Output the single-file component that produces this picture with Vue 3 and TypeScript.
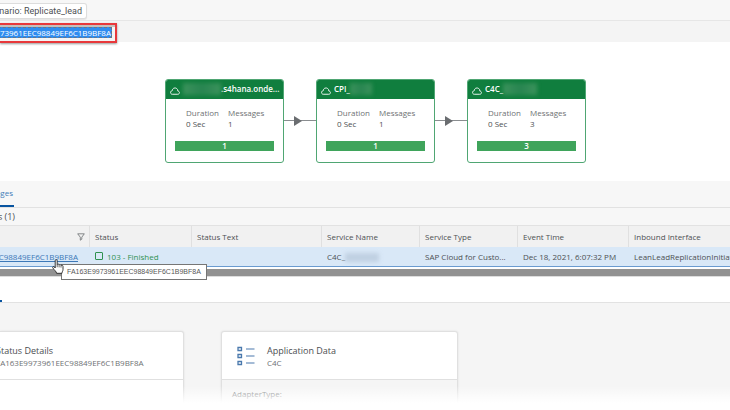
<script setup lang="ts">
interface FlowNode {
  name: string
  masked: string
  maskFirst: boolean
  messages: number
}

interface Column {
  key: string
  label: string
}

const messageId = 'FA163E9973961EEC98849EF6C1B9BF8A'

const nodes: FlowNode[] = [
  { name: '.s4hana.onde...', masked: 'long', maskFirst: true, messages: 1 },
  { name: 'CPI_', masked: 'short', maskFirst: false, messages: 1 },
  { name: 'C4C_', masked: 'mid', maskFirst: false, messages: 3 },
]

const columns: Column[] = [
  { key: 'status', label: 'Status' },
  { key: 'text', label: 'Status Text' },
  { key: 'name', label: 'Service Name' },
  { key: 'type', label: 'Service Type' },
  { key: 'time', label: 'Event Time' },
  { key: 'inbound', label: 'Inbound Interface' },
]
</script>

<template>
  <main class="page">
    <header class="filters">
      <div class="tag"><span>Scenario: Replicate_lead</span></div>
    </header>
    <div class="search">
      <div class="marked">
        <input class="search-input" type="text" readonly aria-label="Message ID" :value="messageId" />
      </div>
    </div>

    <section class="flow">
      <template v-for="(node, i) in nodes" :key="i">
        <div v-if="i > 0" class="link">
          <svg viewBox="0 0 8 10" width="8" height="10"><path d="M0 0L8 5L0 10Z" fill="#6a6d70" /></svg>
        </div>
        <article class="node">
          <h3 class="node-head">
            <svg class="cloud" viewBox="0 0 20 16" width="10" height="8">
              <path
                d="M4.5 14.5H15.5C20 14.5 20 8.5 15.8 8.2C15.5 0 5 0 4.6 7.2C0 7.8 0 14.5 4.5 14.5Z"
                fill="none"
                stroke="#fff"
                stroke-width="1.8"
              />
            </svg>
            <span v-if="node.maskFirst" class="mask" :class="node.masked"></span>
            <span>{{ node.name }}</span>
            <span v-if="!node.maskFirst" class="mask" :class="node.masked"></span>
          </h3>
          <dl class="stats">
            <div>
              <dt>Duration</dt>
              <dd>0 Sec</dd>
            </div>
            <div>
              <dt>Messages</dt>
              <dd>{{ node.messages }}</dd>
            </div>
          </dl>
          <div class="bar">{{ node.messages }}</div>
        </article>
      </template>
    </section>

    <nav class="tabs">
      <button class="tab" type="button"><span>Messages</span></button>
    </nav>
    <div class="toolbar">
      <h2 class="count">Messages (1)</h2>
    </div>

    <div class="table-wrap">
      <table class="grid">
        <colgroup>
          <col class="c-id" />
          <col v-for="c in columns" :key="c.key" :class="'c-' + c.key" />
        </colgroup>
        <thead>
          <tr>
            <th class="filter-cell">
              <svg viewBox="0 0 8 8" width="8" height="8" aria-label="Filtered">
                <path d="M0.7 0.8H7.3L4.8 4.2V6.2L3.3 7.2V4.2Z" fill="none" stroke="#6a6d70" stroke-width="0.8" />
              </svg>
            </th>
            <th v-for="c in columns" :key="c.key">{{ c.label }}</th>
          </tr>
        </thead>
        <tbody>
          <tr>
            <td>
              <div class="id-cell">
                <a href="#">{{ messageId }}</a>
                <svg class="cursor" viewBox="0 0 12 15" width="12" height="15">
                  <path
                    d="M3.2 9V1.6C3.2 0.3 5.2 0.3 5.2 1.6V5.6C5.5 4.8 7 4.9 7.1 5.9C7.6 5.2 8.9 5.4 9 6.4C9.7 5.9 11 6.2 11 7.4V10.4C11 12.2 10 12.6 10 14.3H4.6C4.4 12.4 2.4 11.4 0.8 8.9C0.2 7.8 1.5 7 2.2 7.8Z"
                    fill="#fff"
                    stroke="#222"
                    stroke-width="0.9"
                  />
                  <path d="M5.2 5.6V8.2M7.1 6V8.4M9 6.5V8.6" stroke="#222" stroke-width="0.7" />
                </svg>
                <span class="tooltip" role="tooltip">{{ messageId }}</span>
              </div>
            </td>
            <td class="ok"><i class="box"></i>103 - Finished</td>
            <td></td>
            <td class="masked-cell">C4C_<span class="mask dark"></span></td>
            <td>SAP Cloud for Custo...</td>
            <td>Dec 18, 2021, 6:07:32 PM</td>
            <td>LeanLeadReplicationInitiator</td>
          </tr>
        </tbody>
      </table>
      <div class="scrollbar"></div>
    </div>

    <div class="subtabs"><span class="subtab"></span></div>

    <section class="details">
      <article class="card first">
        <header class="card-head">
          <div class="titles">
            <h3>Status Details</h3>
            <p>{{ messageId }}</p>
          </div>
        </header>
      </article>
      <article class="card second">
        <header class="card-head">
          <svg class="list" viewBox="0 0 18 20" width="18" height="20">
            <path
              d="M1 1.5H4.5V4.5H1ZM1 8.5H4.5V11.5H1ZM1 15.5H4.5V18.5H1Z"
              fill="none"
              stroke="#4a79ad"
              stroke-width="1.3"
            />
            <path d="M9 3H17.5M9 10H17.5M9 17H17.5" stroke="#4a79ad" stroke-width="1.2" />
          </svg>
          <div class="titles">
            <h3>Application Data</h3>
            <p>C4C</p>
          </div>
        </header>
        <div class="card-body">AdapterType:</div>
      </article>
      <div class="fade"></div>
    </section>
  </main>
</template>

<style>
body {
  background: #fff;
  overflow: hidden;
}
</style>

<style scoped>
.page {
  display: flex;
  flex-direction: column;
  height: 100vh;
  overflow: hidden;
  background: #fff;
  color: #4d5053;
  font: 8px/12px 'Open Sans', 'Noto Sans', sans-serif;
}
h2,
h3,
p,
dl,
dd {
  margin: 0;
  font-size: inherit;
  font-weight: 400;
}
.filters {
  flex: none;
  height: 20px;
  padding-top: 3px;
  box-sizing: border-box;
  background: #f7f7f7;
}
.tag {
  display: flex;
  justify-content: flex-end;
  align-items: center;
  width: 87px;
  height: 16px;
  box-sizing: border-box;
  padding-right: 4px;
  border: 1px solid #ddd;
  border-left: 0;
  border-radius: 0 3px 3px 0;
  background: #fff;
  box-shadow: 0 1px 1px #e4e4e4;
  font: 9px/12px Roboto, sans-serif;
  white-space: nowrap;
}
.search {
  height: 22px;
  box-sizing: border-box;
  padding-top: 2px;
  border-top: 1px solid #e6e6e6;
  background: #f4f4f4;
}
.marked {
  display: flex;
  justify-content: flex-end;
  width: 117px;
  height: 20px;
  box-sizing: border-box;
  padding: 2px 3px 0 0;
  border: 2px solid #e8383b;
  border-left: 0;
  background: linear-gradient(#c4c0bc 2px, #f4f4f4 2px);
  box-shadow: 0 1px 2px #999;
}
.search-input {
  flex: none;
  width: 170px;
  height: 11px;
  box-sizing: border-box;
  padding: 0;
  border: 1px dashed #6b7785;
  background: #2f8cf0;
  color: #fff;
  font: 8px/9px 'Open Sans', sans-serif;
  text-align: right;
}
.flow {
  display: flex;
  justify-content: center;
  align-items: center;
  height: 139px;
  box-sizing: border-box;
  padding: 18px 0 0 21px;
}
.node {
  width: 119px;
  height: 84px;
  box-sizing: border-box;
  border: 1px solid #4fa673;
  border-radius: 3px;
  overflow: hidden;
}
.node-head {
  display: flex;
  align-items: center;
  height: 19px;
  box-sizing: border-box;
  padding: 0 4px;
  background: #107e3e;
  color: #fff;
  font-weight: 600;
  line-height: 18px;
  white-space: nowrap;
}
.cloud {
  flex: none;
  margin: 3px 3px 0 0;
}
.mask {
  flex: none;
  height: 12px;
  background: linear-gradient(90deg, #4f9c69, #34895a, #4f9c69);
  filter: blur(2px);
  opacity: 0.7;
}
.mask.long {
  width: 38px;
}
.mask.short {
  width: 22px;
}
.mask.mid {
  width: 34px;
}
.mask.dark {
  display: inline-block;
  width: 34px;
  height: 9px;
  background: #b5c6d9;
  vertical-align: middle;
}
.stats {
  display: flex;
  gap: 9px;
  padding: 8px 0 0 20px;
  line-height: 11px;
}
.stats dt {
  color: #6e7174;
}
.bar {
  margin: 12px 9px 0;
  height: 10px;
  background: #3fa45b;
  color: #fff;
  font-weight: 600;
  line-height: 10px;
  text-align: center;
}
.link {
  display: flex;
  justify-content: center;
  align-items: center;
  width: 32px;
  height: 10px;
  background: linear-gradient(#8a8d90, #8a8d90) center / 100% 1px no-repeat;
}
.link svg {
  margin-right: 4px;
}
.tabs {
  height: 27px;
  box-sizing: border-box;
  border-bottom: 1px solid #e2e2e2;
  background: #f7f7f7;
}
.tab {
  display: flex;
  justify-content: flex-end;
  align-items: center;
  width: 14px;
  height: 26px;
  padding: 0 1px 0 0;
  border: 0;
  border-bottom: 2px solid #0854a0;
  background: none;
  color: #3f7cb8;
  font: inherit;
}
.toolbar {
  height: 18px;
  box-sizing: border-box;
  border-bottom: 1px solid #e2e2e2;
  background: #f7f7f7;
}
.count {
  display: flex;
  justify-content: flex-end;
  width: 15px;
  font-size: 9px;
  line-height: 18px;
  white-space: nowrap;
}
.grid {
  width: 100%;
  table-layout: fixed;
  border-collapse: separate;
  border-spacing: 0;
}
.c-id {
  width: 90px;
}
.c-status {
  width: 102px;
}
.c-text {
  width: 130px;
}
.c-name,
.c-type {
  width: 98px;
}
.c-time {
  width: 111px;
}
.grid th,
.grid td {
  padding: 0 0 0 5px;
  text-align: left;
  font-weight: 400;
  white-space: nowrap;
}
.grid th {
  height: 21px;
  border-right: 1px solid #e0e0e0;
  background: #f1f1f1;
}
.grid th:last-child {
  border-right: 0;
}
.grid th.filter-cell {
  padding-right: 4px;
  text-align: right;
}
.filter-cell svg {
  vertical-align: middle;
}
.grid td {
  height: 20px;
  padding-top: 1px;
  box-sizing: border-box;
  border-bottom: 1px solid #6a9bd0;
  background: #d9e8f7;
}
.id-cell {
  position: relative;
  display: flex;
  justify-content: flex-end;
  padding-right: 12px;
}
.id-cell a {
  color: #3c78b8;
}
.cursor {
  position: absolute;
  z-index: 3;
  left: 47px;
  top: 8px;
}
.tooltip {
  position: absolute;
  z-index: 2;
  left: 56px;
  top: 13px;
  padding: 0 5px;
  border: 1px solid #767676;
  background: #fff;
  color: #575757;
  font: 7px/14px 'Liberation Sans', sans-serif;
}
.grid td.ok {
  color: #2f9150;
}
.box {
  display: inline-block;
  width: 6px;
  height: 6px;
  margin-right: 4px;
  border: 1px solid #2f9150;
  border-radius: 1px;
}
.scrollbar {
  height: 7px;
  margin-top: 2px;
  background: #929292;
  border-bottom: 1px solid #ddd;
}
.subtabs {
  display: flex;
  align-items: flex-end;
  height: 26px;
  box-sizing: border-box;
  border-bottom: 1px solid #e2e2e2;
}
.subtab {
  width: 2px;
  height: 2px;
  background: #0854a0;
}
.details {
  position: relative;
  display: flex;
  align-items: stretch;
  gap: 37px;
  flex: 1;
  min-height: 0;
  padding-top: 28px;
  background: #f5f5f5;
}
.card {
  box-sizing: border-box;
  border: 1px solid #e0e0e0;
  border-radius: 3px 3px 0 0;
  background: #fff;
  box-shadow: 0 0 2px #ddd;
}
.first {
  width: 184px;
  border-left: 0;
  border-top-left-radius: 0;
}
.second {
  width: 237px;
}
.card-head {
  display: flex;
  height: 47px;
  border-bottom: 1px solid #e0e0e0;
  white-space: nowrap;
}
.titles {
  padding-top: 13px;
  line-height: 11px;
}
.titles h3 {
  color: #4b4e51;
  font-size: 9px;
  line-height: 12px;
}
.first .titles {
  margin-left: -4px;
}
.titles p {
  color: #6e7174;
}
.list {
  margin: 14px 12px 0 15px;
}
.card-body {
  height: 29px;
  padding: 8px 10px 0;
  box-sizing: border-box;
  background: #f5f5f5;
  color: #6e7174;
}
.fade {
  position: absolute;
  left: 0;
  right: 0;
  bottom: 0;
  height: 24px;
  background: linear-gradient(rgba(255, 255, 255, 0), #fff 70%);
}
</style>
